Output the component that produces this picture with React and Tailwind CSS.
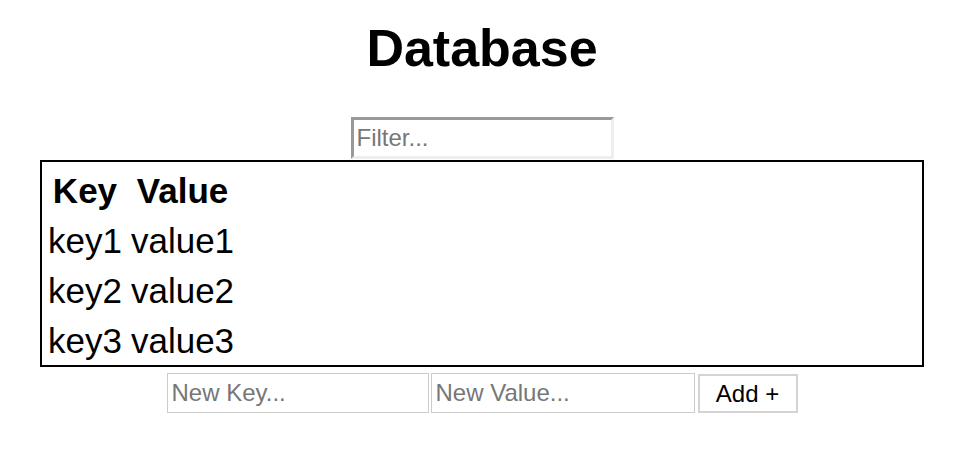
import React, { useState } from 'react';

const ROWS = [
  { key: 'key1', value: 'value1' },
  { key: 'key2', value: 'value2' },
  { key: 'key3', value: 'value3' },
];

export default function App() {
  const [filter, setFilter] = useState('');
  const [newKey, setNewKey] = useState('');
  const [newValue, setNewValue] = useState('');

  const rows = ROWS.filter(r => r.key.includes(filter) || r.value.includes(filter));

  return (
    <div className="w-[964px] h-[464px] bg-white text-black font-['Liberation_Sans',Arial,sans-serif]">
      <h1 className="pt-[18px] text-center text-[52px] font-bold leading-[60px]">Database</h1>

      <div className="mt-[39px] flex justify-center">
        <input
          value={filter}
          onChange={e => setFilter(e.target.value)}
          placeholder="Filter..."
          className="w-[263px] h-[42px] px-[3px] text-[24px] border-[3px] border-t-[#999] border-l-[#999] border-b-[#eee] border-r-[#eee] placeholder:text-[#777] outline-none"
        />
      </div>

      {/* Table */}
      <div className="mx-[40px] mt-px h-[207px] border-2 border-black">
        <table className="border-separate border-spacing-[3px] text-[35px] leading-[41px]">
          <thead>
            <tr>
              <th className="px-[3px] pt-[5px] pb-px font-bold text-center">Key</th>
              <th className="px-[3px] pt-[5px] pb-px font-bold text-center">Value</th>
            </tr>
          </thead>
          <tbody>
            {rows.map(r => (
              <tr key={r.key}>
                <td className="px-[3px] pt-[5px] pb-px">{r.key}</td>
                <td className="px-[3px] pt-[5px] pb-px">{r.value}</td>
              </tr>
            ))}
          </tbody>
        </table>
      </div>

      <div className="mt-[6px] flex justify-center gap-[2px]">
        <input
          value={newKey}
          onChange={e => setNewKey(e.target.value)}
          placeholder="New Key..."
          className="w-[262px] h-[40px] px-[4px] text-[24px] border border-[#ccc] placeholder:text-[#777] outline-none"
        />
        <input
          value={newValue}
          onChange={e => setNewValue(e.target.value)}
          placeholder="New Value..."
          className="w-[264px] h-[40px] px-[4px] text-[24px] border border-[#ccc] placeholder:text-[#777] outline-none"
        />
        <button className="ml-px w-[100px] h-[39px] mt-px text-[24px] bg-white border-2 border-[#d4d4d4]">Add +</button>
      </div>
    </div>
  );
}
